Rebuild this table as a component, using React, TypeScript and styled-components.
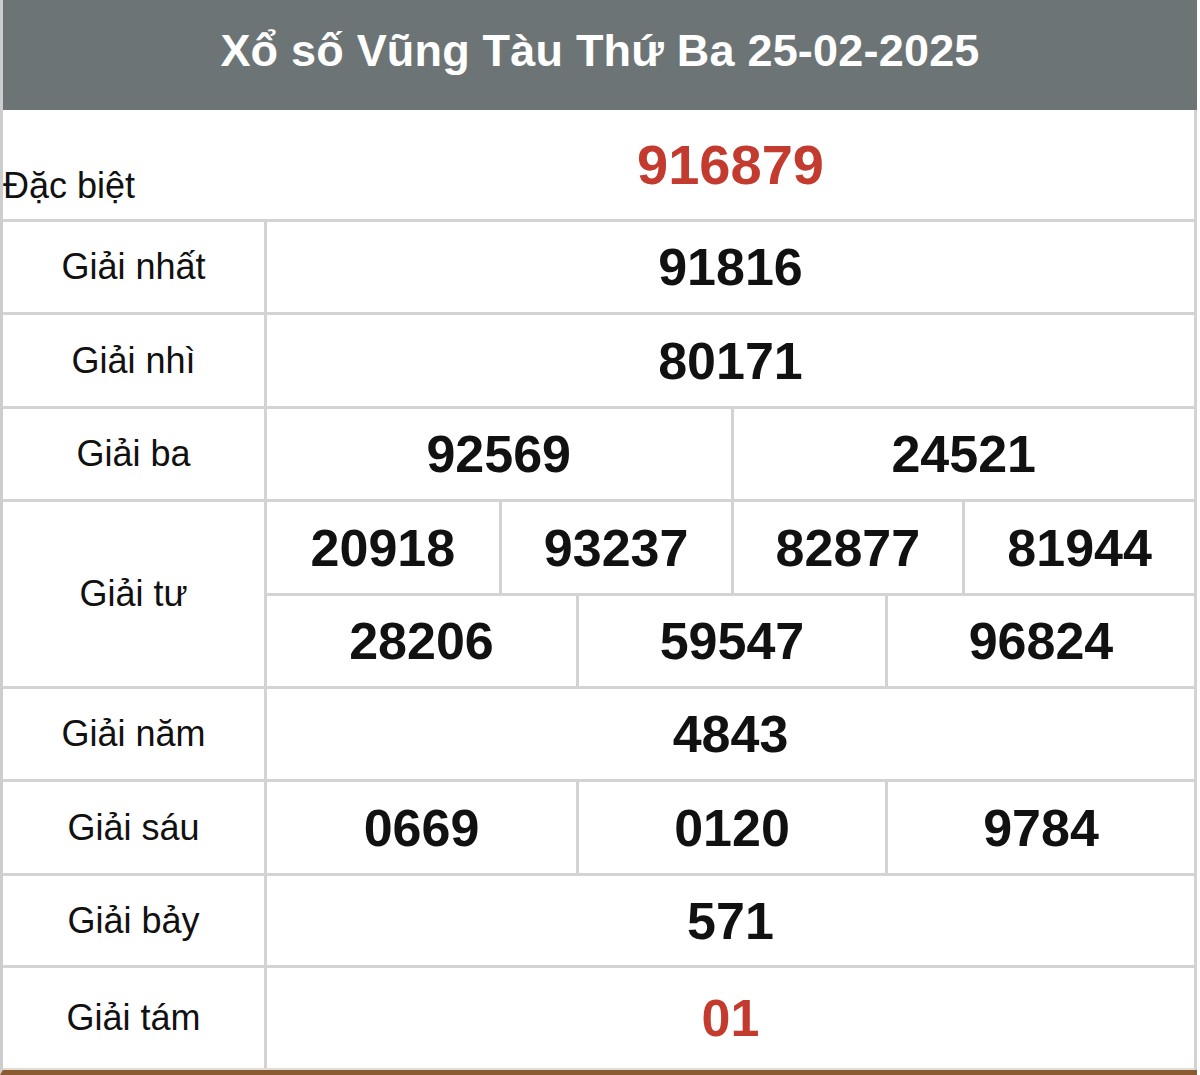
import React from 'react';
import styled, { createGlobalStyle } from 'styled-components';

const Global = createGlobalStyle`
  html, body { margin: 0; padding: 0; background: #ffffff; }
  body { font-family: "Liberation Sans", Arial, Helvetica, sans-serif; }
  #root { width: 1200px; height: 1075px; }
`;

const Page = styled.div`
  box-sizing: border-box;
  width: 1197px;
  height: 1075px;
  display: flex;
  flex-direction: column;
  border-left: 3px solid #cdcdcd;
  border-bottom: 5px solid #8a5b30;
  background: #ffffff;
`;

const Header = styled.div`
  height: 110px;
  flex: none;
  background: #6c7476;
  display: flex;
  align-items: center;
  justify-content: center;
  padding-bottom: 8px;
  box-sizing: border-box;
`;

const Title = styled.h1`
  margin: 0;
  color: #ffffff;
  font-size: 45px;
  font-weight: 700;
  letter-spacing: 0.2px;
`;

const Table = styled.div`
  flex: 1;
  display: flex;
  flex-direction: column;
  border-right: 3px solid #d3d3d3;
`;

const Row = styled.div<{ $h?: number; $last?: boolean }>`
  box-sizing: border-box;
  display: grid;
  grid-template-columns: 264px 1fr;
  ${(p) => (p.$h ? `height: ${p.$h}px; flex: none;` : 'flex: 1;')}
  border-bottom: ${(p) => (p.$last ? '2px solid #e2dcd6' : '3px solid #d3d3d3')};
`;

const Label = styled.div<{ $plain?: boolean }>`
  box-sizing: border-box;
  display: flex;
  align-items: ${(p) => (p.$plain ? 'flex-end' : 'center')};
  justify-content: ${(p) => (p.$plain ? 'flex-start' : 'center')};
  padding-bottom: ${(p) => (p.$plain ? '12px' : '0')};
  border-right: ${(p) => (p.$plain ? '3px solid transparent' : '3px solid #d3d3d3')};
  font-size: 36px;
  color: #111111;
`;

const Values = styled.div`
  display: flex;
  flex-direction: column;
`;

const Line = styled.div<{ $cols: number; $h?: number }>`
  box-sizing: border-box;
  display: grid;
  grid-template-columns: repeat(${(p) => p.$cols}, 1fr);
  ${(p) => (p.$h ? `height: ${p.$h}px; flex: none; border-bottom: 3px solid #d3d3d3;` : 'flex: 1;')}
`;

const Cell = styled.div<{ $red?: boolean; $big?: boolean }>`
  display: flex;
  align-items: center;
  justify-content: center;
  font-weight: 700;
  font-size: ${(p) => (p.$big ? '56px' : '52px')};
  color: ${(p) => (p.$red ? '#c33b2e' : '#111111')};
  & + & {
    border-left: 3px solid #d3d3d3;
  }
`;

type Prize = {
  label: string;
  lines: string[][];
  h?: number;
  red?: boolean;
  big?: boolean;
  plain?: boolean;
  last?: boolean;
};

const prizes: Prize[] = [
  { label: 'Đặc biệt', lines: [['916879']], h: 112, red: true, big: true, plain: true },
  { label: 'Giải nhất', lines: [['91816']], h: 93 },
  { label: 'Giải nhì', lines: [['80171']], h: 94 },
  { label: 'Giải ba', lines: [['92569', '24521']], h: 93 },
  {
    label: 'Giải tư',
    lines: [
      ['20918', '93237', '82877', '81944'],
      ['28206', '59547', '96824'],
    ],
    h: 187,
  },
  { label: 'Giải năm', lines: [['4843']], h: 93 },
  { label: 'Giải sáu', lines: [['0669', '0120', '9784']], h: 94 },
  { label: 'Giải bảy', lines: [['571']], h: 92 },
  { label: 'Giải tám', lines: [['01']], red: true, last: true },
];

export default function App() {
  return (
    <>
      <Global />
      <Page>
        <Header>
          <Title>Xổ số Vũng Tàu Thứ Ba 25-02-2025</Title>
        </Header>
        <Table>
          {prizes.map((p) => (
            <Row key={p.label} $h={p.h} $last={p.last}>
              <Label $plain={p.plain}>{p.label}</Label>
              <Values>
                {p.lines.map((line, i) => (
                  <Line key={i} $cols={line.length} $h={i < p.lines.length - 1 ? 94 : undefined}>
                    {line.map((n, j) => (
                      <Cell key={j} $red={p.red} $big={p.big}>
                        {n}
                      </Cell>
                    ))}
                  </Line>
                ))}
              </Values>
            </Row>
          ))}
        </Table>
      </Page>
    </>
  );
}
